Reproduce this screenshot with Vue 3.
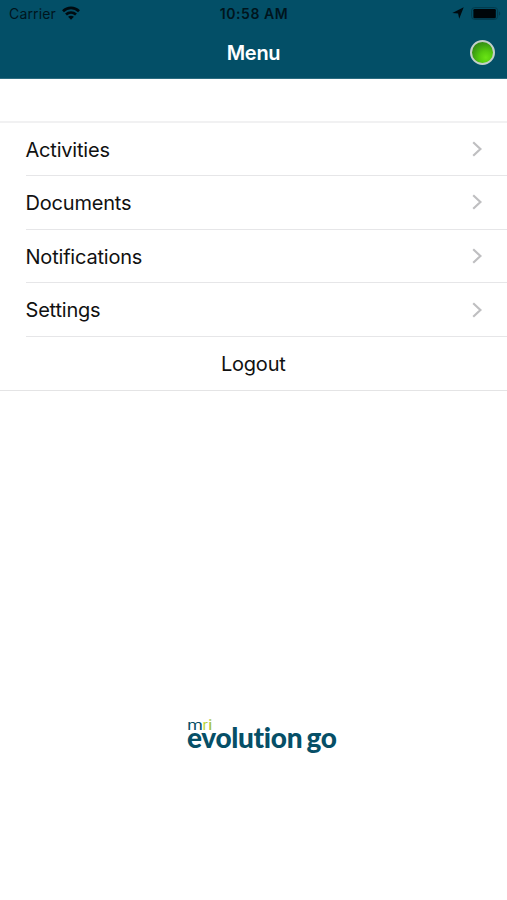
<script setup>
import { ref } from 'vue';

const items = ref(['Activities', 'Documents', 'Notifications', 'Settings']);
</script>

<template>
  <div class="screen">
    <header class="header">
      <div class="status-bar">
        <div class="carrier">
          <span class="carrier-name">Carrier</span>
          <svg class="wifi" viewBox="0 0 18 14" width="18" height="14">
            <g fill="none" stroke="#000b10" stroke-width="2.7">
              <path d="M1 5.2C5.6 .7 12.4 .7 17 5.2" />
              <path d="M4 8.6c2.9-2.7 7.1-2.7 10 0" />
            </g>
            <path d="M6.1 10.8c1.7-1.5 4.1-1.5 5.8 0L9 13.8z" fill="#000b10" />
          </svg>
        </div>
        <span class="time">10:58 AM</span>
        <div class="indicators">
          <svg class="location" viewBox="0 0 12 12" width="12" height="12">
            <path d="M11.7 .3L7.2 11.8L6.1 6.5L.3 6z" fill="#000b10" />
          </svg>
          <svg viewBox="0 0 30 13" width="30" height="13">
            <rect x=".6" y=".6" width="26" height="11.8" rx="3" fill="none" stroke="#033b4c" />
            <rect x="2.4" y="2" width="22.4" height="9.2" rx="1.2" fill="#000609" />
            <path d="M28 4.5c1.7.7 1.7 3.3 0 4z" fill="#033b4c" />
          </svg>
        </div>
      </div>
      <div class="title-bar">
        <span></span>
        <h1 class="title">Menu</h1>
        <span class="online"></span>
      </div>
    </header>

    <ul class="menu">
      <li v-for="item in items" :key="item" class="menu-item">
        <span class="label">{{ item }}</span>
        <svg class="chevron" viewBox="0 0 10 16" width="10" height="16">
          <path d="M1.2 1.2L8.4 8L1.2 14.8" fill="none" stroke="#bfbfc1" stroke-width="2.2" />
        </svg>
      </li>
      <li class="logout"><span class="label">Logout</span></li>
    </ul>

    <footer class="brand">
      <svg viewBox="0 0 154 50" width="154" height="50">
        <g class="brand-small">
          <text x="1" y="13" textLength="16" lengthAdjust="spacingAndGlyphs" fill="#064f67">m</text>
          <text x="16.5" y="13" textLength="5.5" lengthAdjust="spacingAndGlyphs" fill="#b8d433">r</text>
          <text x="22" y="13" textLength="4.5" lengthAdjust="spacingAndGlyphs" fill="#a6c43a">i</text>
        </g>
        <text class="brand-name" x="1" y="31" textLength="150" lengthAdjust="spacing">evolution go</text>
      </svg>
    </footer>
  </div>
</template>

<style>
body {
  margin: 0;
  background: #fff;
}
</style>

<style scoped>
.screen {
  height: 900px;
  display: flex;
  flex-direction: column;
  background: #fff;
  color: #111;
  font-family: Inter, "Liberation Sans", sans-serif;
  overflow: hidden;
}

.header {
  height: 79px;
  box-sizing: border-box;
  background: #034f67;
  border-bottom: 1px solid #2c6c80;
}

.status-bar {
  display: grid;
  grid-template-columns: 1fr auto 1fr;
  align-items: center;
  height: 27px;
  padding: 0 6px 0 7px;
  color: #00151d;
}

.carrier {
  display: flex;
  align-items: center;
  gap: 6px;
  padding-left: 2px;
}

.carrier-name {
  font-size: 14px;
  letter-spacing: 0.15px;
}

.wifi {
  margin-top: -2px;
}

.time {
  font-size: 14px;
  font-weight: 600;
  letter-spacing: 0.55px;
}

.indicators {
  display: flex;
  align-items: center;
  justify-content: flex-end;
  gap: 6px;
  margin-top: -1px;
}

.location {
  margin-right: 1px;
}

.title-bar {
  display: grid;
  grid-template-columns: 1fr auto 1fr;
  align-items: center;
  height: 50px;
  padding: 0 12px;
}

.title {
  margin: 0;
  padding-top: 1px;
  color: #fff;
  font-size: 20px;
  font-weight: 600;
  letter-spacing: -0.3px;
}

.online {
  justify-self: end;
  box-sizing: border-box;
  width: 25px;
  height: 25px;
  border: 2px solid #c3cfc9;
  border-radius: 50%;
  background: radial-gradient(circle at 66% 74%, #6ae414 0%, #54ca0e 32%, #3d9f12 62%, #267016 98%);
}

.menu {
  list-style: none;
  margin: 42px 0 0;
  padding: 0;
  border-top: 2px solid #f1f1f2;
  border-bottom: 1px solid #e4e4e5;
}

.menu-item,
.logout {
  display: flex;
  align-items: center;
  height: 53.7px;
  box-sizing: border-box;
}

.menu-item {
  justify-content: space-between;
  margin-left: 26px;
  padding-right: 25px;
  border-bottom: 1px solid #e6e6e8;
}

.menu-item:first-child {
  height: 53px;
}

.logout {
  justify-content: center;
  height: 53px;
}

.label {
  margin-left: -0.5px;
  padding-top: 1px;
  font-size: 20px;
  letter-spacing: -0.2px;
}

.brand {
  display: flex;
  justify-content: center;
  margin-top: 326px;
  padding-left: 18px;
}

.brand-small {
  font: 400 13px Inter, sans-serif;
}

.brand-name {
  fill: #064f67;
  font: 900 28px Lato, sans-serif;
  font-variant-ligatures: none;
  word-spacing: -2px;
}
</style>
